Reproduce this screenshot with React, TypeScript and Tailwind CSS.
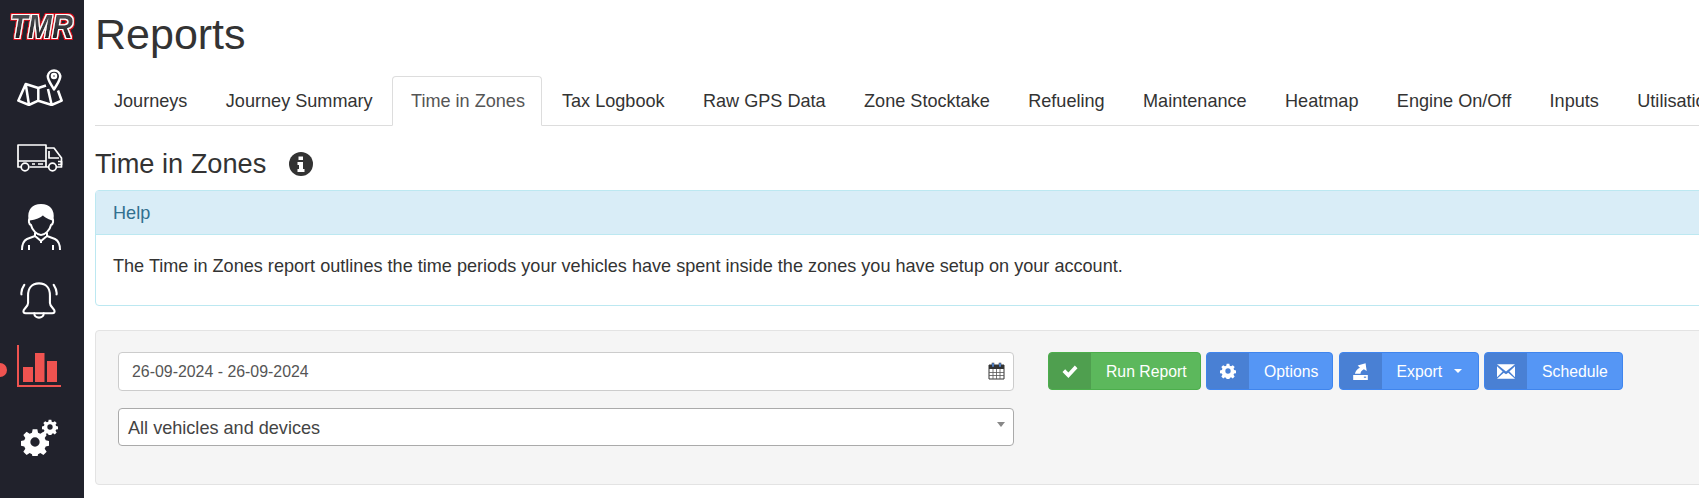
import React from 'react';

const tabs = ['Journeys', 'Journey Summary', 'Time in Zones', 'Tax Logbook', 'Raw GPS Data', 'Zone Stocktake', 'Refueling', 'Maintenance', 'Heatmap', 'Engine On/Off', 'Inputs', 'Utilisation'];

const Gear = ({ size, className }: { size: number; className?: string }) => (
  <svg width={size} height={size} viewBox="0 0 24 24" className={className}>
    <path
      fill="currentColor"
      fillRule="evenodd"
      d="M10 1h4l.6 3 2 .9 2.600-1.700 2.800 2.800-1.700 2.600.9 2 3 .6v4l-3 .6-.9 2 1.700 2.600-2.800 2.800-2.600-1.700-2 .9-.6 3h-4l-.6-3-2-.9-2.600 1.700-2.800-2.800 1.700-2.600-.9-2-3-.6v-4l3-.6.9-2-1.700-2.600 2.800-2.800 2.600 1.700 2-.9z M12 8a4 4 0 1 0 0 8 4 4 0 0 0 0-8z"
    />
  </svg>
);

const Sidebar = () => (
  <div className="w-[84px] shrink-0 bg-[#21222c] flex flex-col items-start relative min-h-[498px]">
    <svg width="68" height="28" viewBox="0 0 68 28" className="mt-[13px] ml-[8px] overflow-visible">
      <defs>
        <filter id="logo-edge" x="-10%" y="-25%" width="120%" height="150%">
          <feMorphology in="SourceAlpha" operator="dilate" radius="1" result="inner" />
          <feMorphology in="SourceAlpha" operator="dilate" radius="2" result="outer" />
          <feFlood floodColor="#e0101c" />
          <feComposite in2="outer" operator="in" result="red" />
          <feFlood floodColor="#ffffff" />
          <feComposite in2="inner" operator="in" result="white" />
          <feMerge>
            <feMergeNode in="red" />
            <feMergeNode in="white" />
            <feMergeNode in="SourceGraphic" />
          </feMerge>
        </filter>
        <linearGradient id="logo-fill" x1="0" y1="0" x2="0" y2="1">
          <stop offset="0" stopColor="#5a5b60" />
          <stop offset="1" stopColor="#141417" />
        </linearGradient>
      </defs>
      <text x="33.500" y="25.400" textAnchor="middle" fontFamily="Liberation Sans" fontStyle="italic" fontWeight="700" fontSize="33" fill="url(#logo-fill)" textLength="63" lengthAdjust="spacingAndGlyphs" filter="url(#logo-edge)">TMR</text>
    </svg>
    <svg width="46" height="38" viewBox="0 0 46 38" fill="none" stroke="#fff" strokeWidth="2.500" strokeLinejoin="round" className="mt-[27px] ml-[17px]">
      <path d="M29 17.500L21.300 20 8.700 16 1.300 32.700 12 37 21.300 32.700 34.700 37 44.700 32.700 41 22.500M8.700 16L12 37M21.300 20V32.700M31 21L34.700 37" />
      <path d="M37 21.500C34 16 30.800 12.500 30.800 8A6.300 6.300 0 0 1 43.300 8C43.300 12.500 40 16 37 21.500Z" />
      <circle cx="37" cy="8" r="2" />
    </svg>
    <svg width="46" height="28" viewBox="0 0 46 28" fill="none" stroke="#fff" strokeWidth="1.700" strokeLinejoin="round" className="mt-[38px] ml-[17px]">
      <path d="M4 23H1V1H29V23H12.500M29 23H31M29 4H37L44.500 14V23H40M1 17H29" />
      <path d="M32 7V14H42M41 17.500H44.500V20.500H41" />
      <circle cx="8" cy="23" r="3.800" />
      <circle cx="35.500" cy="23" r="3.800" />
      <path d="M15 20H18M21 20H26" />
    </svg>
    <svg width="42" height="47" viewBox="0 0 42 47" className="mt-[32px] ml-[20px]" fill="none" stroke="#fff" strokeWidth="2" strokeLinejoin="round">
      <path d="M9.500 15C8.500 16 8.500 20 11 21C12 26 17 31 21 31S30 26 31 21C33.500 20 33.500 16 32.500 15" />
      <path d="M9.500 15.500C8 6 13 1 21 1S34 6 32.500 15.500C29 14.500 25 13 23 10C20 13 14 15 9.500 15.500Z" fill="#fff" />
      <path d="M15 28.500V32L7 35C3 37 2 40 2 46M27 28.500V32L35 35C39 37 40 40 40 46M15 32L21 37 27 32M21 37V39M9 46V41M33 46V41" />
    </svg>
    <svg width="38" height="39" viewBox="0 0 40 39" className="mt-[30px] ml-[20px]" fill="none" stroke="#fff" strokeWidth="2.200" strokeLinecap="round" strokeLinejoin="round">
      <path d="M20 1.500C12 1.500 8.500 7 8.500 14V22C8.500 25 5.500 27 4 29.500C3 31.500 4 33 6 33H34C36 33 37 31.500 36 29.500C34.500 27 31.500 25 31.500 22V14C31.500 7 28 1.500 20 1.500Z" />
      <path d="M15 33C15 39 25 39 25 33M1.500 13C1 9.500 2.500 6 4.500 3M38.500 13C39 9.500 37.500 6 35.500 3" />
    </svg>
    <div className="relative mt-[25px] ml-[17px] w-[44px] h-[42px]">
      <div className="absolute left-[-17px] top-[18px] w-[7px] h-[14px] bg-[#ef5350] rounded-r-full" />
      <svg width="44" height="42" viewBox="0 0 44 42">
        <path d="M1 0V41H44" fill="none" stroke="#ef5350" strokeWidth="2" />
        <rect x="6" y="22" width="10" height="15" fill="#ef5350" />
        <rect x="18" y="8" width="9.500" height="29" fill="#ef5350" />
        <rect x="30" y="16" width="10" height="21" fill="#ef5350" />
      </svg>
    </div>
    <div className="relative mt-[32px] ml-[21px] w-[37px] h-[37px] text-white">
      <Gear size={28} className="absolute left-0 bottom-0" />
      <Gear size={16} className="absolute right-0 top-0" />
    </div>
  </div>
);

const BtnIcon = ({ children, tone }: { children: React.ReactNode; tone: string }) => (
  <span className={`w-[42px] self-stretch flex items-center justify-center ${tone}`}>{children}</span>
);

const Actions = () => (
  <div className="flex gap-[5.500px] text-white text-[15.750px] leading-none">
    <button className="h-[38px] w-[152.600px] flex items-center bg-[#5cb85c] border border-[#4cae4c] rounded-[4px] overflow-hidden">
      <BtnIcon tone="bg-[#4f9f4f]">
        <svg width="18" height="15" viewBox="0 0 16 14"><path d="M1 7.500L3.500 5 6.500 8 12.500 1.500 15 4 6.500 13z" fill="#fff" /></svg>
      </BtnIcon>
      <span className="pl-[15px] pt-[2px]">Run Report</span>
    </button>
    <button className="h-[38px] w-[127px] flex items-center bg-[#5596f5] border border-[#3f85ee] rounded-[4px] overflow-hidden">
      <BtnIcon tone="bg-[#4980d4]"><Gear size={16} /></BtnIcon>
      <span className="pl-[15px] pt-[2px]">Options</span>
    </button>
    <button className="h-[38px] w-[140px] flex items-center bg-[#5596f5] border border-[#3f85ee] rounded-[4px] overflow-hidden">
      <BtnIcon tone="bg-[#4980d4]">
        <svg width="17" height="18" viewBox="0 0 15 16" fill="#fff">
          <path d="M1 11.500H14V16H1zM2.500 10.500C3 8 4.500 6 7 5L5 3 12 1 13 8 10.500 6.500C8.500 7.500 7.500 9 7.500 10.500z" />
          <rect x="10.500" y="13" width="2" height="1" fill="#4980d4" />
        </svg>
      </BtnIcon>
      <span className="pl-[15px] pt-[2px]">Export</span>
      <span className="ml-[12px] w-0 h-0 border-x-[4px] border-x-transparent border-t-[4px] border-t-white" />
    </button>
    <button className="h-[38px] w-[139px] flex items-center bg-[#5596f5] border border-[#3f85ee] rounded-[4px] overflow-hidden">
      <BtnIcon tone="bg-[#4980d4]">
        <svg width="18" height="15" viewBox="0 0 16 13" fill="#fff">
          <path d="M0 0L8 6.500 16 0zM0 1.800V11.500L5 6.500zM16 1.800V11.500L11 6.500zM0 13H16L10 7.500 8 9 6 7.500z" />
        </svg>
      </BtnIcon>
      <span className="pl-[15px] pt-[2px]">Schedule</span>
    </button>
  </div>
);

export default function App() {
  return (
    <div className="flex h-[498px] w-[1699px] overflow-hidden bg-white text-[#333] font-['Liberation_Sans',Arial,sans-serif]">
      <Sidebar />
      <div className="flex-1 min-w-0 pl-[11px]">
        <h1 className="text-[43px] leading-[44px] mt-[12px] mb-[20px]">Reports</h1>
        <ul className="flex border-b border-[#ddd] h-[50px] text-[18.100px] whitespace-nowrap">
          {tabs.map(t =>
            t === 'Time in Zones' ? (
              <li key={t} className="h-[50px] pl-[18px] pr-[16px] pt-[2px] mr-[1px] flex items-center bg-white border border-[#ddd] border-b-white rounded-t-[4px] text-[#555]">{t}</li>
            ) : (
              <li key={t} className="h-[50px] px-[19px] pt-[2px] mr-[0.400px] flex items-center">{t}</li>
            )
          )}
        </ul>
        <div className="flex items-center mt-[18px] h-[40px]">
          <h3 className="text-[27.200px] leading-none">Time in Zones</h3>
          <svg width="24" height="24" viewBox="0 0 24 24" className="ml-[23px]">
            <circle cx="12" cy="12" r="12" fill="#333" />
            <path d="M9.500 4.500H14V8H9.500zM8.500 10H14V17H15.500V20H8.500V17H10V13H8.500z" fill="#fff" />
          </svg>
        </div>
        <div className="mt-[6px] h-[116px] border border-[#bce8f1] rounded-[4px] mr-[-10px]">
          <div className="h-[44px] pt-[3px] bg-[#d9edf7] border-b border-[#bce8f1] px-[17px] flex items-center text-[18.100px] text-[#31708f]">Help</div>
          <p className="px-[17px] pt-[18px] text-[18.100px] leading-[26px]">The Time in Zones report outlines the time periods your vehicles have spent inside the zones you have setup on your account.</p>
        </div>
        <div className="mt-[24px] h-[155px] bg-[#f5f5f5] border border-[#e3e3e3] rounded-[4px] mr-[-10px] pl-[22px] pt-[21px] flex items-start">
          <div className="w-[896px] flex flex-col gap-[17.500px]">
            <div className="h-[38.500px] bg-white border border-[#ccc] rounded-[4px] pl-[13px] pr-[8px] flex items-center justify-between text-[15.900px] text-[#555]">
              <span className="pt-[2px]">26-09-2024 - 26-09-2024</span>
              <svg width="17" height="18" viewBox="0 0 17 18">
                <path d="M1 3H16V17H1z" fill="#fff" stroke="#333" />
                <rect x="1" y="3" width="15" height="4" fill="#333" />
                <rect x="4" y="1" width="2" height="4" fill="#5596f5" stroke="#333" strokeWidth="0.500" />
                <rect x="11" y="1" width="2" height="4" fill="#5596f5" stroke="#333" strokeWidth="0.500" />
                <path d="M1 10.500H16M1 13.500H16M5 7V17M8.500 7V17M12 7V17" stroke="#555" strokeWidth="0.800" />
              </svg>
            </div>
            <div className="h-[38px] bg-white border border-[#aaa] rounded-[4px] pl-[9px] pr-[8px] flex items-center justify-between text-[18.100px] text-[#444]">
              <span className="pt-[4px]">All vehicles and devices</span>
              <span className="w-0 h-0 mb-[5px] border-x-[4px] border-x-transparent border-t-[5px] border-t-[#888]" />
            </div>
          </div>
          <div className="ml-[34px]"><Actions /></div>
        </div>
      </div>
    </div>
  );
}
